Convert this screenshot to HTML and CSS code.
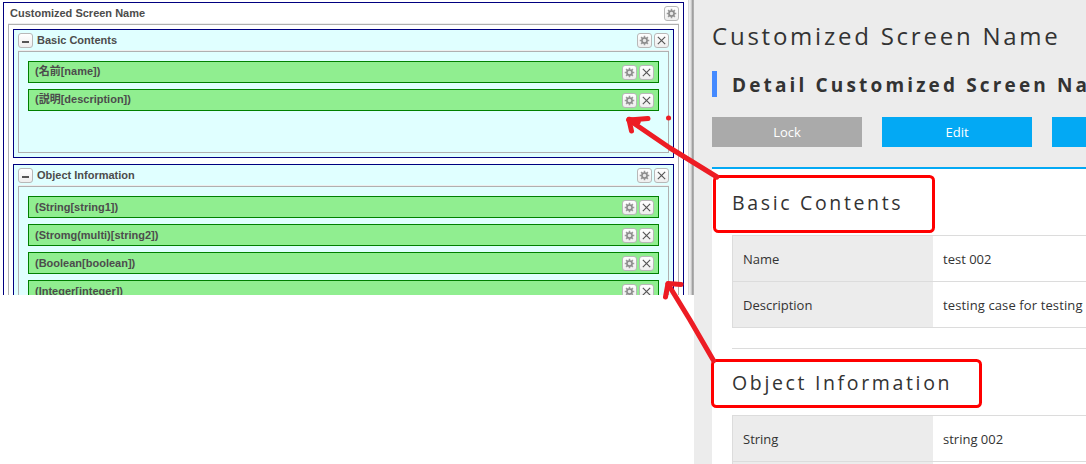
FILE: index.html
```html
<!DOCTYPE html>
<html lang="en">
<head>
<meta charset="utf-8">
<title>Customized Screen Name</title>
<link rel="stylesheet" href="styles.css">
</head>
<body>
<svg class="defs" width="0" height="0">
  <symbol id="gear" viewBox="0 0 12 12">
    <path d="M6 .8v10.400M.8 6h10.400M2.300 2.300l7.400 7.400M9.700 2.300l-7.400 7.400" stroke="#999" stroke-width="1.7"/>
    <circle cx="6" cy="6" r="2.800" fill="#e8e8e8" stroke="#8c8c8c" stroke-width="1.7"/>
  </symbol>
  <symbol id="close" viewBox="0 0 12 12">
    <path d="M2 2l8 8M10 2l-8 8" stroke="#555" stroke-width="1.25"/>
  </symbol>
</svg>
<main class="page">
  <section class="designer">
    <div class="screen">
      <header class="bar"><span class="title">Customized Screen Name</span><i class="btn"><svg><use href="#gear"/></svg></i></header>
      <div class="screen-body">
        <div class="window basic">
          <header class="bar"><i class="btn minus"></i><span class="title">Basic Contents</span><i class="btn"><svg><use href="#gear"/></svg></i><i class="btn"><svg><use href="#close"/></svg></i></header>
          <div class="drop">
            <div class="item"><span class="title">(名前[name])</span><i class="btn"><svg><use href="#gear"/></svg></i><i class="btn"><svg><use href="#close"/></svg></i></div>
            <div class="item"><span class="title">(説明[description])</span><i class="btn"><svg><use href="#gear"/></svg></i><i class="btn"><svg><use href="#close"/></svg></i></div>
          </div>
        </div>
        <div class="window object">
          <header class="bar"><i class="btn minus"></i><span class="title">Object Information</span><i class="btn"><svg><use href="#gear"/></svg></i><i class="btn"><svg><use href="#close"/></svg></i></header>
          <div class="drop">
            <div class="item"><span class="title">(String[string1])</span><i class="btn"><svg><use href="#gear"/></svg></i><i class="btn"><svg><use href="#close"/></svg></i></div>
            <div class="item"><span class="title">(Stromg(multi)[string2])</span><i class="btn"><svg><use href="#gear"/></svg></i><i class="btn"><svg><use href="#close"/></svg></i></div>
            <div class="item"><span class="title">(Boolean[boolean])</span><i class="btn"><svg><use href="#gear"/></svg></i><i class="btn"><svg><use href="#close"/></svg></i></div>
            <div class="item"><span class="title">(Integer[integer])</span><i class="btn"><svg><use href="#gear"/></svg></i><i class="btn"><svg><use href="#close"/></svg></i></div>
          </div>
        </div>
      </div>
    </div>
    <div class="splitter"></div>
  </section>
  <section class="detail">
    <h1>Customized Screen Name</h1>
    <h2>Detail Customized Screen Name</h2>
    <div class="actions"><span class="action lock">Lock</span><span class="action">Edit</span><span class="action"></span></div>
    <div class="card">
      <h3>Basic Contents</h3>
      <dl>
        <dt>Name</dt><dd>test 002</dd>
        <dt>Description</dt><dd class="long">testing case for testing</dd>
      </dl>
      <hr>
      <h3>Object Information</h3>
      <dl>
        <dt>String</dt><dd>string 002</dd>
        <dt></dt><dd></dd>
      </dl>
    </div>
  </section>
  <svg class="notes" width="1086" height="464" fill="none" stroke-linecap="round" stroke-linejoin="round">
    <g stroke="#ff0000" stroke-width="3">
      <rect x="714.5" y="176.5" width="219" height="55" rx="4"/>
      <rect x="712.5" y="360.5" width="268" height="46" rx="4"/>
    </g>
    <g stroke="#ed1c24" stroke-width="5">
      <path d="M717 177L670 148L629 120"/>
      <path d="M648 118.500L629 120L631.500 131"/>
      <path d="M629 119.500L638 122" stroke-width="5.500"/>
      <path d="M668.500 118h.1"/>
      <path d="M713.500 360.500L690 320L668 284"/>
      <path d="M681 284.500L668 283.500L665.500 297"/>
    </g>
  </svg>
</main>
</body>
</html>
```
FILE: styles.css
```css
* { box-sizing: border-box; }
body { margin: 0; background: #fff; overflow: hidden; }
.defs { position: absolute; }
.page { position: relative; display: flex; align-items: flex-start; width: 1086px; height: 464px; overflow: hidden; }

.designer {
  display: flex; flex: none; width: 694px; height: 295px; overflow: hidden; padding: 2px 0 0 3px;
  font: bold 11px/14px "Liberation Sans", "Noto Sans CJK JP", sans-serif; color: #4c4c4c;
}
.screen { flex: none; width: 681px; height: 400px; border: 1px solid #000080; padding: 0 4px; }
.bar { display: flex; align-items: center; gap: 2px; height: 21px; }
.title { flex: 1; white-space: nowrap; }
.bar .title { padding-bottom: 2px; }
.screen > .bar { padding: 0 0 0 2px; }
.screen-body { height: 380px; border: 1px solid #b0b0b0; padding: 4px; box-shadow: 0 -1px #eee; }
.window { border: 1px solid #000080; background: #e0ffff; padding: 0 4px 4px; margin-bottom: 6px; }
.window .bar .title { padding-left: 2px; }
.basic { height: 129px; }
.object { height: 260px; }
.drop { border: 1px solid #b0b0b0; padding: 9px; box-shadow: 0 -1px #eee; }
.basic .drop { height: 102px; }
.object .drop { height: 220px; }
.item {
  display: flex; align-items: center; gap: 2px; height: 22px; margin-bottom: 6px; padding: 0 4px 0 6px;
  border: 1px solid #008000; background: #90ee90;
}
.item .title { padding-bottom: 1px; }
.basic .item .title { padding-bottom: 3px; }
.item .btn { margin-top: 1px; }
.btn {
  display: flex; flex: none; align-items: center; justify-content: center; width: 15px; height: 15px;
  border: 1px solid #b8b8b8; border-radius: 3px; background: linear-gradient(#fff, #eee);
}
.btn svg { width: 11px; height: 11px; }
.minus::before { content: ""; width: 7px; height: 2px; margin-top: 3px; background: #555; }
.splitter { flex: none; width: 6px; height: 295px; margin: -2px 0 0 4px; background: linear-gradient(90deg, #ccc 0, #eee 25%, #ddd 50%, #999 78%, #bbb); }

.detail {
  flex: none; width: 392px; height: 464px; padding-left: 18px; background: #ececec; overflow: hidden;
  color: #333; font: 13px/20px "Open Sans", "Noto Sans", sans-serif;
}
h1, h2, h3, dl, dd { margin: 0; white-space: nowrap; }
h1 { height: 71px; padding-top: 19px; font-size: 24px; line-height: 34px; font-weight: 400; letter-spacing: 2.770px; }
h2 { height: 26px; border-left: 5px solid #448aff; padding-left: 15px; font-size: 19px; line-height: 28px; font-weight: 700; letter-spacing: 3.150px; }
.actions { display: flex; gap: 20px; height: 50px; margin-top: 20px; }
.action { flex: none; width: 150px; height: 30px; background: #03a9f4; color: #fff; line-height: 30px; text-align: center; }
.lock { background: #aaa; }
.card { height: 297px; padding-left: 20px; border-top: 2px solid #03a9f4; background: #fff; }
h3 { height: 66px; padding-top: 20px; font-size: 19.500px; line-height: 28px; font-weight: 400; letter-spacing: 2.650px; }
dl { display: grid; grid-template-columns: 200px 1fr; border-left: 1px solid #dcdcdc; border-top: 1px solid #dcdcdc; }
dt, dd { height: 46px; padding: 13px 10px 0; border-bottom: 1px solid #dcdcdc; }
dt { background: #ececec; }
.long { letter-spacing: .12px; }
hr { height: 1px; margin: 20px 0 0; border: 0; background: #dcdcdc; }
.notes { position: absolute; left: 0; top: 0; }
```
